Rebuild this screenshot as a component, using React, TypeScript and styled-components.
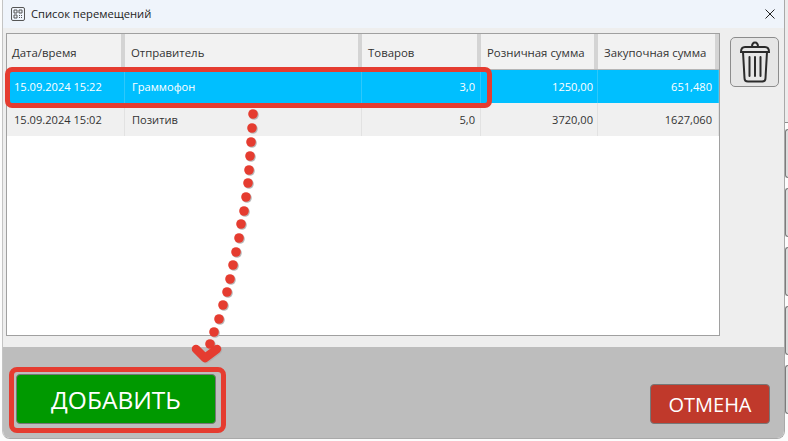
import React from 'react';
import styled, { createGlobalStyle } from 'styled-components';

const GlobalStyle = createGlobalStyle`
  html, body {
    margin: 0;
    padding: 0;
    background: #fcfcfc;
    overflow: hidden;
  }
  * {
    box-sizing: border-box;
  }
`;

const Screen = styled.div`
  position: relative;
  width: 788px;
  height: 441px;
  display: flex;
  padding: 0 0 2px 2px;
  font-family: 'Open Sans', 'Noto Sans', sans-serif;
  overflow: hidden;
`;

const Window = styled.div`
  flex: 1;
  height: 100%;
  display: flex;
  flex-direction: column;
  border-right: 1px solid #a9a9a9;
  border-bottom: 1px solid #a9a9a9;
  border-left: 1px solid #c4c4c4;
  border-radius: 0 0 8px 8px;
  overflow: hidden;
`;

const BehindStrip = styled.div`
  width: 3px;
  flex: none;
  display: flex;
  flex-direction: column;
  gap: 10px;
`;

const BehindTop = styled.div`
  height: 123px;
  flex: none;
  margin-bottom: -4px;
  background: #ececec;
  border-bottom: 1px solid #8e8e8e;
`;

const BehindPill = styled.div`
  height: 49px;
  flex: none;
  background: #dcdcdc;
  border: 1px solid #7c7c7c;
  border-right: none;
  border-radius: 4px 0 0 4px;
`;

const TitleBar = styled.div`
  height: 28px;
  flex: none;
  display: flex;
  align-items: center;
  gap: 6px;
  padding: 0 9px 1px 8px;
  background: #eff4fb;
  color: #222;
  font-size: 11.2px;
`;

const Title = styled.span`
  flex: 1;
`;

const Body = styled.div`
  flex: 1;
  display: flex;
  gap: 10px;
  padding: 5px 5px 11px 3px;
  background: #eeeeee;
`;

const Table = styled.div`
  position: relative;
  width: 714px;
  height: 303px;
  flex: none;
  border: 1px solid #a0a0a0;
  background: #fff;
`;

const Row = styled.div<{ $selected?: boolean; $header?: boolean }>`
  display: grid;
  grid-template-columns: 118px 237px 119px 117px 121px;
  height: ${(p) => (p.$header ? '36px' : '33px')};
  background: ${(p) => (p.$selected ? '#00bfff' : p.$header ? '#f2f2f2' : '#f0f0f0')};
  color: ${(p) => (p.$selected ? '#fff' : '#333')};
  border-bottom: ${(p) => (p.$header ? '1px solid #b5b5b5' : 'none')};
`;

const HeadCell = styled.div`
  display: flex;
  align-items: center;
  padding: 2px 0 0 6px;
  border-right: 4px solid #d4d4d4;
  font-size: 11.4px;
  white-space: nowrap;

  &:first-child {
    padding-left: 5px;
  }
`;

const Cell = styled.div<{ $right?: boolean; $selected?: boolean }>`
  display: flex;
  align-items: center;
  justify-content: ${(p) => (p.$right ? 'flex-end' : 'flex-start')};
  padding: 0 5px 0 7px;
  border-right: 1px solid ${(p) => (p.$selected ? '#2ec8fb' : '#e2e2e2')};
  font-size: 11.1px;
  white-space: nowrap;

  &:nth-child(4) {
    padding-right: 4px;
  }

  &:last-child {
    padding-right: 6px;
  }
`;

const RowHighlight = styled.div`
  position: absolute;
  left: -2px;
  top: 33px;
  width: 487px;
  height: 41px;
  border: 5px solid #e53c30;
  border-radius: 7px;
`;

const TrashButton = styled.button`
  width: 50px;
  height: 50px;
  margin-top: 4px;
  padding: 0;
  display: flex;
  align-items: center;
  justify-content: center;
  background: #e6e6e6;
  border: 1px solid #8c8c8c;
  border-radius: 5px;
`;

const Footer = styled.div`
  height: 91px;
  flex: none;
  display: flex;
  align-items: flex-end;
  justify-content: space-between;
  padding: 0 14px 5px 6px;
  background: #bdbdbd;
`;

const ButtonFrame = styled.div`
  padding: 2px 5px 4px 2px;
  border: 5px solid #e53c30;
  border-radius: 8px;
`;

const ActionButton = styled.button<{ $color: string; $big?: boolean }>`
  display: block;
  width: ${(p) => (p.$big ? '200px' : '120px')};
  height: ${(p) => (p.$big ? '50px' : '40px')};
  margin-bottom: ${(p) => (p.$big ? '0' : '9px')};
  padding: 0;
  background: ${(p) => p.$color};
  border: 1px solid #777;
  border-radius: 4px;
  color: #fff;
  font-family: inherit;
  font-size: ${(p) => (p.$big ? '24.5px' : '20px')};
`;

const ArrowLayer = styled.svg`
  position: absolute;
  inset: 0;
  pointer-events: none;
`;

const rows = [
  { date: '15.09.2024 15:22', sender: 'Граммофон', count: '3,0', retail: '1250,00', cost: '651,480', selected: true },
  { date: '15.09.2024 15:02', sender: 'Позитив', count: '5,0', retail: '3720,00', cost: '1627,060', selected: false },
];

const dots = [
  [253, 114], [252, 128], [251, 142], [250, 156], [249, 170], [248, 183], [246, 197], [244, 211],
  [241, 224], [239, 238], [236, 252], [233, 265], [230, 279], [227, 292], [223, 305], [219, 319],
  [214, 332], [210, 344],
];

const behindPills = [0, 1, 2, 3, 4];

const AppIcon = () => (
  <svg width="14" height="14" viewBox="0 0 14 14" fill="none">
    <rect x="0.5" y="0.5" width="13" height="13" rx="1.5" stroke="#555" />
    <path d="M3 3h3v3H3zM8 3h3v3H8zM3 8h3v3H3z" stroke="#555" />
    <path d="M8 8h1v1H8zM10 8h1v1h-1zM8 10h1v1H8zM10 10h1v1h-1z" fill="#555" />
  </svg>
);

const CloseIcon = () => (
  <svg width="10" height="10" viewBox="0 0 10 10" stroke="#222" strokeWidth="1">
    <path d="M0.5 0.5l9 9M9.5 0.5l-9 9" />
  </svg>
);

const TrashIcon = () => (
  <svg width="34" height="42" viewBox="0 0 34 42" fill="none" stroke="#2b2b2b" strokeWidth="2" strokeLinecap="round">
    <path d="M14 6c0-6 6-6 6 0" />
    <path d="M3 11c0-3 1-5 4-5h20c3 0 4 2 4 5z" />
    <path d="M5 11l1.500 26c0 2 1.500 3.500 3.500 3.500h14c2 0 3.500-1.500 3.500-3.500L29 11" />
    <path d="M11.500 16v19M17 16v19M22.500 16v19" />
  </svg>
);

const arrowHead = 'M196 349L205 358L217 349';

const App = () => (
  <>
    <GlobalStyle />
    <Screen>
      <Window>
        <TitleBar>
          <AppIcon />
          <Title>Список перемещений</Title>
          <CloseIcon />
        </TitleBar>
        <Body>
          <Table>
            <Row $header>
              <HeadCell>Дата/время</HeadCell>
              <HeadCell>Отправитель</HeadCell>
              <HeadCell>Товаров</HeadCell>
              <HeadCell>Розничная сумма</HeadCell>
              <HeadCell>Закупочная сумма</HeadCell>
            </Row>
            {rows.map((r) => (
              <Row key={r.date} $selected={r.selected}>
                <Cell $selected={r.selected}>{r.date}</Cell>
                <Cell $selected={r.selected}>{r.sender}</Cell>
                <Cell $selected={r.selected} $right>{r.count}</Cell>
                <Cell $selected={r.selected} $right>{r.retail}</Cell>
                <Cell $selected={r.selected} $right>{r.cost}</Cell>
              </Row>
            ))}
            <RowHighlight />
          </Table>
          <TrashButton>
            <TrashIcon />
          </TrashButton>
        </Body>
        <Footer>
          <ButtonFrame>
            <ActionButton $big $color="#009900">ДОБАВИТЬ</ActionButton>
          </ButtonFrame>
          <ActionButton $color="#c0392b">ОТМЕНА</ActionButton>
        </Footer>
      </Window>
      <BehindStrip>
        <BehindTop />
        {behindPills.map((n) => (
          <BehindPill key={n} />
        ))}
      </BehindStrip>
      <ArrowLayer width="788" height="441" viewBox="0 0 788 441">
        <g fill="#b9b9b9" transform="translate(1 1)">
          {dots.map(([x, y]) => (
            <circle key={y} cx={x} cy={y} r="4.800" />
          ))}
          <path d={arrowHead} fill="none" stroke="#b0b0b0" strokeWidth="8.500" strokeLinecap="round" strokeLinejoin="round" />
        </g>
        <g fill="#e53c30">
          {dots.map(([x, y]) => (
            <circle key={y} cx={x} cy={y} r="4.800" />
          ))}
          <path d={arrowHead} fill="none" stroke="#e53c30" strokeWidth="8.500" strokeLinecap="round" strokeLinejoin="round" />
        </g>
      </ArrowLayer>
    </Screen>
  </>
);

export default App;
